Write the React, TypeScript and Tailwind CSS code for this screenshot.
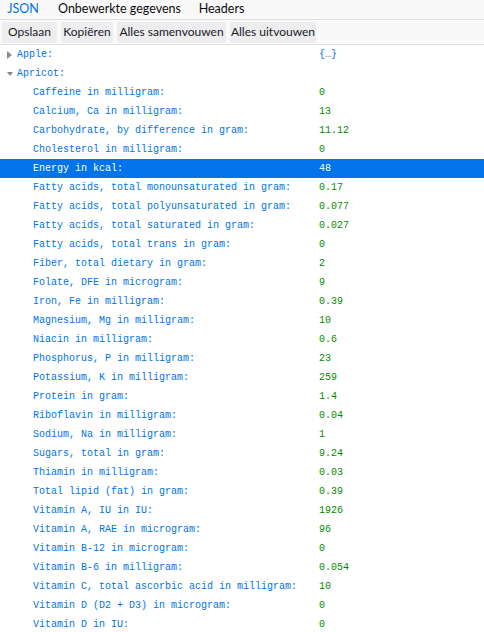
import React from 'react';

const rows: [string, string][] = [
  ['Caffeine in milligram:', '0'],
  ['Calcium, Ca in milligram:', '13'],
  ['Carbohydrate, by difference in gram:', '11.12'],
  ['Cholesterol in milligram:', '0'],
  ['Energy in kcal:', '48'],
  ['Fatty acids, total monounsaturated in gram:', '0.17'],
  ['Fatty acids, total polyunsaturated in gram:', '0.077'],
  ['Fatty acids, total saturated in gram:', '0.027'],
  ['Fatty acids, total trans in gram:', '0'],
  ['Fiber, total dietary in gram:', '2'],
  ['Folate, DFE in microgram:', '9'],
  ['Iron, Fe in milligram:', '0.39'],
  ['Magnesium, Mg in milligram:', '10'],
  ['Niacin in milligram:', '0.6'],
  ['Phosphorus, P in milligram:', '23'],
  ['Potassium, K in milligram:', '259'],
  ['Protein in gram:', '1.4'],
  ['Riboflavin in milligram:', '0.04'],
  ['Sodium, Na in milligram:', '1'],
  ['Sugars, total in gram:', '9.24'],
  ['Thiamin in milligram:', '0.03'],
  ['Total lipid (fat) in gram:', '0.39'],
  ['Vitamin A, IU in IU:', '1926'],
  ['Vitamin A, RAE in microgram:', '96'],
  ['Vitamin B-12 in microgram:', '0'],
  ['Vitamin B-6 in milligram:', '0.054'],
  ['Vitamin C, total ascorbic acid in milligram:', '10'],
  ['Vitamin D (D2 + D3) in microgram:', '0'],
  ['Vitamin D in IU:', '0'],
];

const ui = { fontFamily: 'Lato, "Liberation Sans", Arial, sans-serif' };
const mono = { fontFamily: '"Liberation Mono", "DejaVu Sans Mono", monospace' };

// toolbar buttons with their widths in the reference
const buttons: [string, string][] = [
  ['Opslaan', 'w-[55px]'],
  ['Kopiëren', 'w-[52px]'],
  ['Alles samenvouwen', 'w-[109px]'],
  ['Alles uitvouwen', 'w-[86px]'],
];

const Twisty = ({ open }: { open: boolean }) => (
  <svg width="6" height="8" viewBox="0 0 6 8" className="absolute left-[7px] top-[6px]">
    {open ? <path d="M0 2 L6 2 L3 6 Z" fill="#8a8a8a" /> : <path d="M0 0 L5 4 L0 8 Z" fill="#8a8a8a" />}
  </svg>
);

export default function App() {
  return (
    <div className="w-[484px] h-[632px] overflow-hidden bg-white">
      <div className="h-[20px] flex items-center bg-[#f9f9fa] border-b border-[#e0e0e2] text-[12.5px] text-[#0c0c0d]" style={ui}>
        <div className="w-[46px] text-center text-[#0074e8]">JSON</div>
        <div className="w-[147px] text-center">Onbewerkte gegevens</div>
        <div className="w-[57px] text-center">Headers</div>
      </div>
      <div className="h-[25px] flex items-center gap-[4px] px-[2px] bg-[#f9f9fa] border-b border-[#e0e0e2] text-[12px] text-[#1a1a1c]" style={ui}>
        {buttons.map(([b, w]) => (
          <div key={b} className={`${w} h-[21px] flex items-center justify-center whitespace-nowrap bg-[#ededf0] rounded-[2px]`}>{b}</div>
        ))}
      </div>
      <div className="text-[10px] leading-[19px]" style={mono}>
        <div className="relative h-[19px] flex">
          <Twisty open={false} />
          <div className="w-[319px] pl-[17px] text-[#0074e8]">Apple:</div>
          <div className="text-[#0074e8]">{'{'}<span className="text-[#8a8a8a]">…</span>{'}'}</div>
        </div>
        <div className="relative h-[19px] flex">
          <Twisty open={true} />
          <div className="w-[319px] pl-[17px] text-[#0074e8]">Apricot:</div>
        </div>
        {rows.map(([k, v]) => {
          const sel = k === 'Energy in kcal:';
          return (
            <div key={k} className={`h-[19px] flex ${sel ? 'bg-[#0074e8] text-white' : ''}`}>
              <div className={`w-[319px] pl-[33px] whitespace-pre ${sel ? '' : 'text-[#0074e8]'}`}>{k}</div>
              <div className={sel ? '' : 'text-[#058b00]'}>{v}</div>
            </div>
          );
        })}
      </div>
    </div>
  );
}
